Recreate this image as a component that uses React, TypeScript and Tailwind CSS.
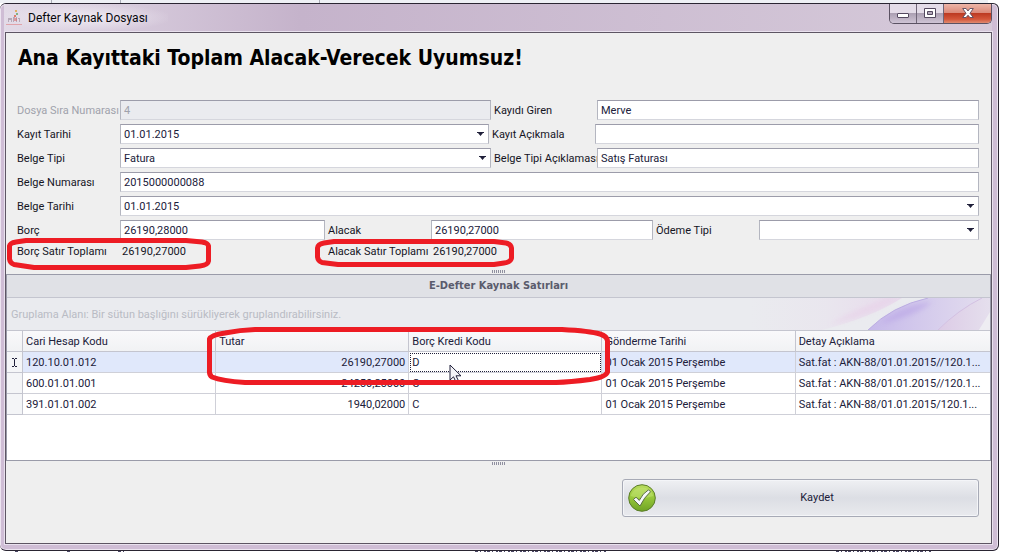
import type { ReactNode } from "react";

const FIELD =
  "h-5 w-full min-w-0 border border-t-[#9c9caa] border-l-[#b4b6c0] border-r-[#b4b6c0] border-b-[#d5d6dd] bg-white px-[3px] text-[11px] text-[#20203a] outline-none disabled:bg-[#eaebef] disabled:text-[#a0a2ac]";

function Label({ htmlFor, children, muted }: { htmlFor: string; children: ReactNode; muted?: boolean }) {
  return (
    <label htmlFor={htmlFor} className={muted ? "pt-0.5 whitespace-nowrap text-[#a0a2ac]" : "pt-0.5 whitespace-nowrap pl-[3px] text-[#15151f] first:pl-0"}>
      {children}
    </label>
  );
}

function TextField({ id, value, disabled }: { id: string; value: string; disabled?: boolean }) {
  return <input id={id} type="text" defaultValue={value} disabled={disabled} className={FIELD} />;
}

function DropDown({ id, value }: { id: string; value: string }) {
  return (
    <div className="relative flex min-w-0">
      <select id={id} defaultValue={value} className={`${FIELD} appearance-none pt-0.5`}>
        <option value={value}>{value}</option>
      </select>
      <svg viewBox="0 0 7 4" className="pointer-events-none absolute top-2 right-[5px] h-1 w-[7px]" fill="#20203a" aria-hidden="true">
        <path d="M0 0h7v1H6L3.5 4 1 1H0z" />
      </svg>
    </div>
  );
}

function Grip() {
  return (
    <svg viewBox="0 0 14 3" className="mx-auto h-[3px] w-3.5" aria-hidden="true">
      {[0, 2, 4, 6, 8, 10, 12].map((x) => (
        <path key={x} d={`M${x} 0h1v3h-1z`} fill="#8f8f9f" />
      ))}
    </svg>
  );
}

const rows = [
  { code: "120.10.01.012", amount: "26190,27000", kind: "D", date: "01 Ocak 2015 Perşembe", detail: "Sat.fat : AKN-88/01.01.2015//120.1..." },
  { code: "600.01.01.001", amount: "24250,25000", kind: "C", date: "01 Ocak 2015 Perşembe", detail: "Sat.fat : AKN-88/01.01.2015//120.1..." },
  { code: "391.01.01.002", amount: "1940,02000", kind: "C", date: "01 Ocak 2015 Perşembe", detail: "Sat.fat : AKN-88/01.01.2015/120.1..." },
];

const HEAD = "h-[21px] truncate border-r border-b border-[#c4c5cf] bg-linear-to-b from-[#f9f9fb] to-[#f1f2f4] px-[3px] pt-0.5 text-left font-normal last:border-r-0";
const CELL = "h-[21px] truncate border-r border-b border-[#cfd0d8] px-[3px] pt-0.5 last:border-r-0";

function TitleBar() {
  return (
    <header className="relative flex h-[27px] items-start bg-linear-to-r from-[#e2dae7] via-[#c5b3cb] via-30% to-[#d6cada]">
      <div className="flex h-[27px] items-center gap-1.5 bg-radial from-[#efeaf2] to-transparent to-75% pr-5 pl-0.5">
        <svg viewBox="0 0 16 16" className="h-4 w-4" aria-hidden="true">
          <path d="M9 0h2v2H9z" fill="#e0b060" />
          <path d="M10 3h2v2h-2z" fill="#7fb287" />
          <path d="M8 5h2v2H8z" fill="#dd7d6b" />
          <path d="M2 12V8h3v2H3v2zM5 8h1v4H5zM7 7h2v1H8v4H7zM10 7h1v5h-1zM12 8h2v4h-1V9h-1z" fill="#b5a9b8" />
          <path d="M8 8h3v3H8z" fill="#d77777" opacity=".65" />
          <path d="M0 14h16v1H0z" fill="#e0a3aa" />
        </svg>
        <span className="text-xs text-[#08080c]">Defter Kaynak Dosyası</span>
      </div>
      <div className="ml-auto flex h-5 overflow-hidden rounded-b-[5px] border border-t-0 border-[#5b5263]">
        <button type="button" aria-label="Simge durumuna küçült" className="flex w-[27px] items-center justify-center border-r border-[#6f6577] bg-linear-to-b from-[#e4dce8] from-45% via-[#aca0b3] via-50% to-[#cfc4d5]">
          <svg viewBox="0 0 12 13" className="h-[13px] w-3" aria-hidden="true">
            <rect x=".5" y="6.5" width="11" height="4" rx=".5" fill="#fff" stroke="#54495f" />
          </svg>
        </button>
        <button type="button" aria-label="Ekranı kapla" className="flex w-[27px] items-center justify-center border-r border-[#6f6577] bg-linear-to-b from-[#e4dce8] from-45% via-[#aca0b3] via-50% to-[#cfc4d5]">
          <svg viewBox="0 0 12 11" className="h-[11px] w-3" aria-hidden="true">
            <path d="M.5.5h11v9H.5z" fill="#fff" stroke="#54495f" />
            <path d="M3.5 3.5h5v3h-5z" fill="#b3a8ba" stroke="#54495f" />
          </svg>
        </button>
        <button type="button" aria-label="Kapat" className="flex w-[47px] items-center justify-center bg-[linear-gradient(to_bottom,#edb5a8_0%,#dc8b7b_45%,#bd3a22_50%,#d4563a_80%,#e08a70_100%)]">
          <svg viewBox="0 0 12 11" className="h-[11px] w-3" aria-hidden="true">
            <path d="M.7.5h3.4L6 3 7.9.5h3.4L8 5.3l3.3 4.200H7.900L6 7.200 4.100 9.500H.7L4 5.300z" fill="#fff" stroke="#5b4a5c" strokeWidth=".9" />
          </svg>
        </button>
      </div>
    </header>
  );
}

function EntryForm() {
  return (
    <form className="flex flex-col gap-1 pr-3 pl-[11px]">
      <div className="grid grid-cols-[103px_minmax(0,371fr)_106px_minmax(0,382fr)] items-center">
        <Label htmlFor="sira" muted>Dosya Sıra Numarası</Label>
        <TextField id="sira" value="4" disabled />
        <Label htmlFor="giren">Kayıdı Giren</Label>
        <TextField id="giren" value="Merve" />
      </div>
      <div className="grid grid-cols-[103px_minmax(0,369fr)_106px_minmax(0,384fr)] items-center">
        <Label htmlFor="kayit">Kayıt Tarihi</Label>
        <DropDown id="kayit" value="01.01.2015" />
        <Label htmlFor="aciklama">Kayıt Açıkmala</Label>
        <TextField id="aciklama" value="" />
      </div>
      <div className="grid grid-cols-[103px_minmax(0,371fr)_106px_minmax(0,382fr)] items-center">
        <Label htmlFor="tip">Belge Tipi</Label>
        <DropDown id="tip" value="Fatura" />
        <Label htmlFor="tipaciklama">Belge Tipi Açıklaması</Label>
        <TextField id="tipaciklama" value="Satış Faturası" />
      </div>
      <div className="grid grid-cols-[103px_minmax(0,1fr)] items-center">
        <Label htmlFor="numara">Belge Numarası</Label>
        <TextField id="numara" value="2015000000088" />
      </div>
      <div className="grid grid-cols-[103px_minmax(0,1fr)] items-center">
        <Label htmlFor="belgetarih">Belge Tarihi</Label>
        <DropDown id="belgetarih" value="01.01.2015" />
      </div>
      <div className="grid grid-cols-[103px_minmax(0,205fr)_106px_minmax(0,222fr)_106px_minmax(0,220fr)] items-center">
        <Label htmlFor="borc">Borç</Label>
        <TextField id="borc" value="26190,28000" />
        <Label htmlFor="alacak">Alacak</Label>
        <TextField id="alacak" value="26190,27000" />
        <Label htmlFor="odeme">Ödeme Tipi</Label>
        <DropDown id="odeme" value="" />
      </div>
      <div className="grid h-4 grid-cols-[103px_minmax(0,205fr)_106px_minmax(0,222fr)_106px_minmax(0,220fr)] items-center text-[#15151f]">
        <span>Borç Satır Toplamı</span>
        <span className="pl-0.5">26190,27000</span>
        <span className="pl-[3px] whitespace-nowrap">Alacak Satır Toplamı</span>
        <span className="pl-0.5">26190,27000</span>
      </div>
    </form>
  );
}

function GroupArea() {
  return (
    <div className="relative flex h-[33px] items-center border-b border-[#c4c5cf] bg-[#eaebef] pt-0.5 pl-1 text-[#b9bbc4]">
      Gruplama Alanı: Bir sütun başlığını sürükliyerek gruplandırabilirsiniz.
      <svg viewBox="0 0 240 32" className="absolute top-0 right-0 h-8 w-60" aria-hidden="true">
        <defs>
          <linearGradient id="pink" x1="0" x2="1">
            <stop offset="0" stopColor="#e6d0ea" stopOpacity="0" />
            <stop offset=".5" stopColor="#e6d0ea" stopOpacity=".3" />
            <stop offset="1" stopColor="#e6d0ea" />
          </linearGradient>
          <linearGradient id="violet" x1="0" x2="1">
            <stop offset="0" stopColor="#c6b9ea" />
            <stop offset=".45" stopColor="#d3c9ec" />
            <stop offset="1" stopColor="#e2dcee" />
          </linearGradient>
          <linearGradient id="mauve" x1="0" x2="1">
            <stop offset="0" stopColor="#dccbe6" />
            <stop offset="1" stopColor="#e5dfed" />
          </linearGradient>
          <filter id="soft">
            <feGaussianBlur stdDeviation="2.5" />
          </filter>
        </defs>
        <path d="M0 0h152Q120 20 72 32H0z" fill="url(#pink)" opacity=".6" />
        <path d="M80 26Q108 10 138 0h10Q120 18 80 26z" fill="#e8cfe8" opacity=".6" filter="url(#soft)" />
        <path d="M118 32Q142 8 178 0h54Q208 14 188 32z" fill="url(#violet)" />
        <path d="M118 32Q142 8 178 0" fill="none" stroke="#bcaee2" />
        <path d="M130 26Q152 6 182 4Q166 18 130 26z" fill="#b9a4e6" opacity=".6" filter="url(#soft)" />
        <path d="M188 32Q208 12 232 0h8v16L229 32z" fill="url(#mauve)" />
        <path d="M188 32Q208 12 232 0" fill="none" stroke="#d3c0e2" />
        <path d="M240 14L229 32h11z" fill="#eeedf2" />
      </svg>
    </div>
  );
}

function LinesPanel() {
  return (
    <section className="flex flex-1 flex-col border border-[#9a9ba9] bg-white">
      <h2 className="flex h-[23px] items-center justify-center border-b border-[#c4c5cf] bg-[#e0e1e6] font-['DejaVu_Sans_Condensed','DejaVu_Sans',sans-serif] text-[11px] font-bold text-[#5a5b6c]">
        E-Defter Kaynak Satırları
      </h2>
      <GroupArea />
      <table className="w-full table-fixed border-separate border-spacing-0 text-[#20203a]">
        <thead>
          <tr>
            <th className={`${HEAD} w-4`} aria-label="Satır" />
            <th className={`${HEAD} w-[19.65%]`}>Cari Hesap Kodu</th>
            <th className={`${HEAD} w-[19.65%]`}>Tutar</th>
            <th className={`${HEAD} w-[19.65%]`}>Borç Kredi Kodu</th>
            <th className={`${HEAD} w-[19.65%]`}>Gönderme Tarihi</th>
            <th className={HEAD}>Detay Açıklama</th>
          </tr>
        </thead>
        <tbody>
          {rows.map((r, i) => (
            <tr key={r.code} className={i === 0 ? "bg-[#e0e8fb]" : "bg-white"}>
              <td className="border-r border-b border-[#c4c5cf] bg-[#f4f5f7] p-0">
                {i === 0 && (
                  <svg viewBox="0 0 5 9" className="mx-auto h-[9px] w-[5px]" fill="none" stroke="#20203a" aria-hidden="true">
                    <path d="M0 .5h2M3 .5h2M2.5 1v7M0 8.5h2M3 8.5h2" />
                  </svg>
                )}
              </td>
              <td className={CELL}>{r.code}</td>
              <td className={`${CELL} text-right`}>{r.amount}</td>
              <td className={i === 0 ? `${CELL} bg-white outline-1 -outline-offset-2 outline-dotted outline-[#20203a]` : CELL}>{r.kind}</td>
              <td className={CELL}>{r.date}</td>
              <td className={CELL}>{r.detail}</td>
            </tr>
          ))}
        </tbody>
      </table>
    </section>
  );
}

function SaveButton() {
  return (
    <button
      type="button"
      className="ml-auto flex h-[38px] w-[357px] items-center rounded-[3px] border border-[#a7aab6] bg-linear-to-b from-[#eff0f3] via-[#dcdee4] to-[#e9eaee] pl-[5px] text-[#20203a] inset-ring inset-ring-[#f4f5f8]"
    >
      <svg viewBox="0 0 28 28" className="h-7 w-7" aria-hidden="true">
        <defs>
          <linearGradient id="green" x1="0" y1="0" x2="0" y2="1">
            <stop offset="0" stopColor="#b9dc60" />
            <stop offset=".45" stopColor="#9aca3c" />
            <stop offset="1" stopColor="#6fa324" />
          </linearGradient>
        </defs>
        <circle cx="14" cy="14" r="13.3" fill="url(#green)" stroke="#5b7d2a" />
        <path d="M2.5 12A12 12 0 0 1 25.5 12Q14 16 2.5 12z" fill="#d3ee8c" opacity=".35" />
        <path d="M5.5 15.5L8 13.2l3.3 3.2Q14.5 9.5 20.5 5.8l2 2Q16 13.5 12 22z" fill="#f7f8fb" stroke="#5c6f45" strokeWidth="1" strokeLinejoin="round" />
      </svg>
      <span className="flex-1 text-center">Kaydet</span>
    </button>
  );
}

function Annotations() {
  return (
    <svg viewBox="0 0 1010 552" className="pointer-events-none absolute top-0 left-0 h-[552px] w-[1010px]" fill="none" aria-hidden="true">
      <path d="M450 365v15l3.5-3.2 2.5 5.2 2.5-1.2-2.5-5h5z" fill="#f4f4f8" stroke="#20203a" />
      <g stroke="#ed1c24" strokeWidth="5" strokeLinejoin="round">
        <path d="M26 240.5H186L202 242Q208 243 208.5 246V261Q208 265 200 266L186 267.5H34L14 264.5Q10 263 9.5 259V246Q10 243 16 242z" />
        <path d="M334 241.5H494L506 243Q511 244 511.5 248V258Q511 262 504 263L494 264.5H338L322 262.5Q318 261 317.5 257V248Q318 244 324 243z" />
        <path d="M255 329.5H562Q590 331 600 334Q607 336 607.5 341V372Q606 377 590 379.5Q570 382 556 382.5H245Q222 381 212 377Q209 375 209.5 370V339Q211 335 225 333Q240 330 255 329.5z" />
      </g>
    </svg>
  );
}

export default function App() {
  return (
    <div className="relative flex min-h-screen flex-col bg-white font-[Roboto,sans-serif] text-[11px] leading-4">
      <div className="mr-[22px] flex h-[3px] bg-[#eef0f5]">
        <div className="w-[52px] border-r border-[#a9abb6]" />
        <div className="w-[69px] border-r border-[#a9abb6]" />
        <div className="w-[199px] border-r border-[#a9abb6]" />
      </div>
      <div className="mr-[11px] flex flex-1 flex-col rounded-[6px] border-t border-r border-b border-[#2a2532] bg-[#cfbdd5] inset-ring inset-ring-[#ece4f0]">
        <div className="pr-[6px] pl-1">
          <TitleBar />
        </div>
        <div className="mr-[5px] mb-[5px] ml-1 flex flex-1 flex-col border border-[#e9e1ee]">
          <main className="flex flex-1 flex-col border border-[#5d5563] bg-[#efefef]">
            <h1 className="px-3 pt-[11px] pb-7 font-['DejaVu_Sans_Condensed','DejaVu_Sans',sans-serif] text-[21px] leading-7 font-bold text-black">
              Ana Kayıttaki Toplam Alacak-Verecek Uyumsuz!
            </h1>
            <EntryForm />
            <div className="pt-2.5 pb-px">
              <Grip />
            </div>
            <LinesPanel />
            <div className="pt-px pb-3.5">
              <Grip />
            </div>
            <div className="flex pr-3 pb-[26px]">
              <SaveButton />
            </div>
          </main>
        </div>
      </div>
      <svg viewBox="0 0 1010 1" preserveAspectRatio="none" className="h-px w-full" stroke="#4c4866" strokeDasharray="3 2 1 3 2 1" aria-hidden="true">
        <path d="M15 .5h3M67 .5h5M118 .5h6M475 .5h132M836 .5h96" />
      </svg>
      <Annotations />
    </div>
  );
}
